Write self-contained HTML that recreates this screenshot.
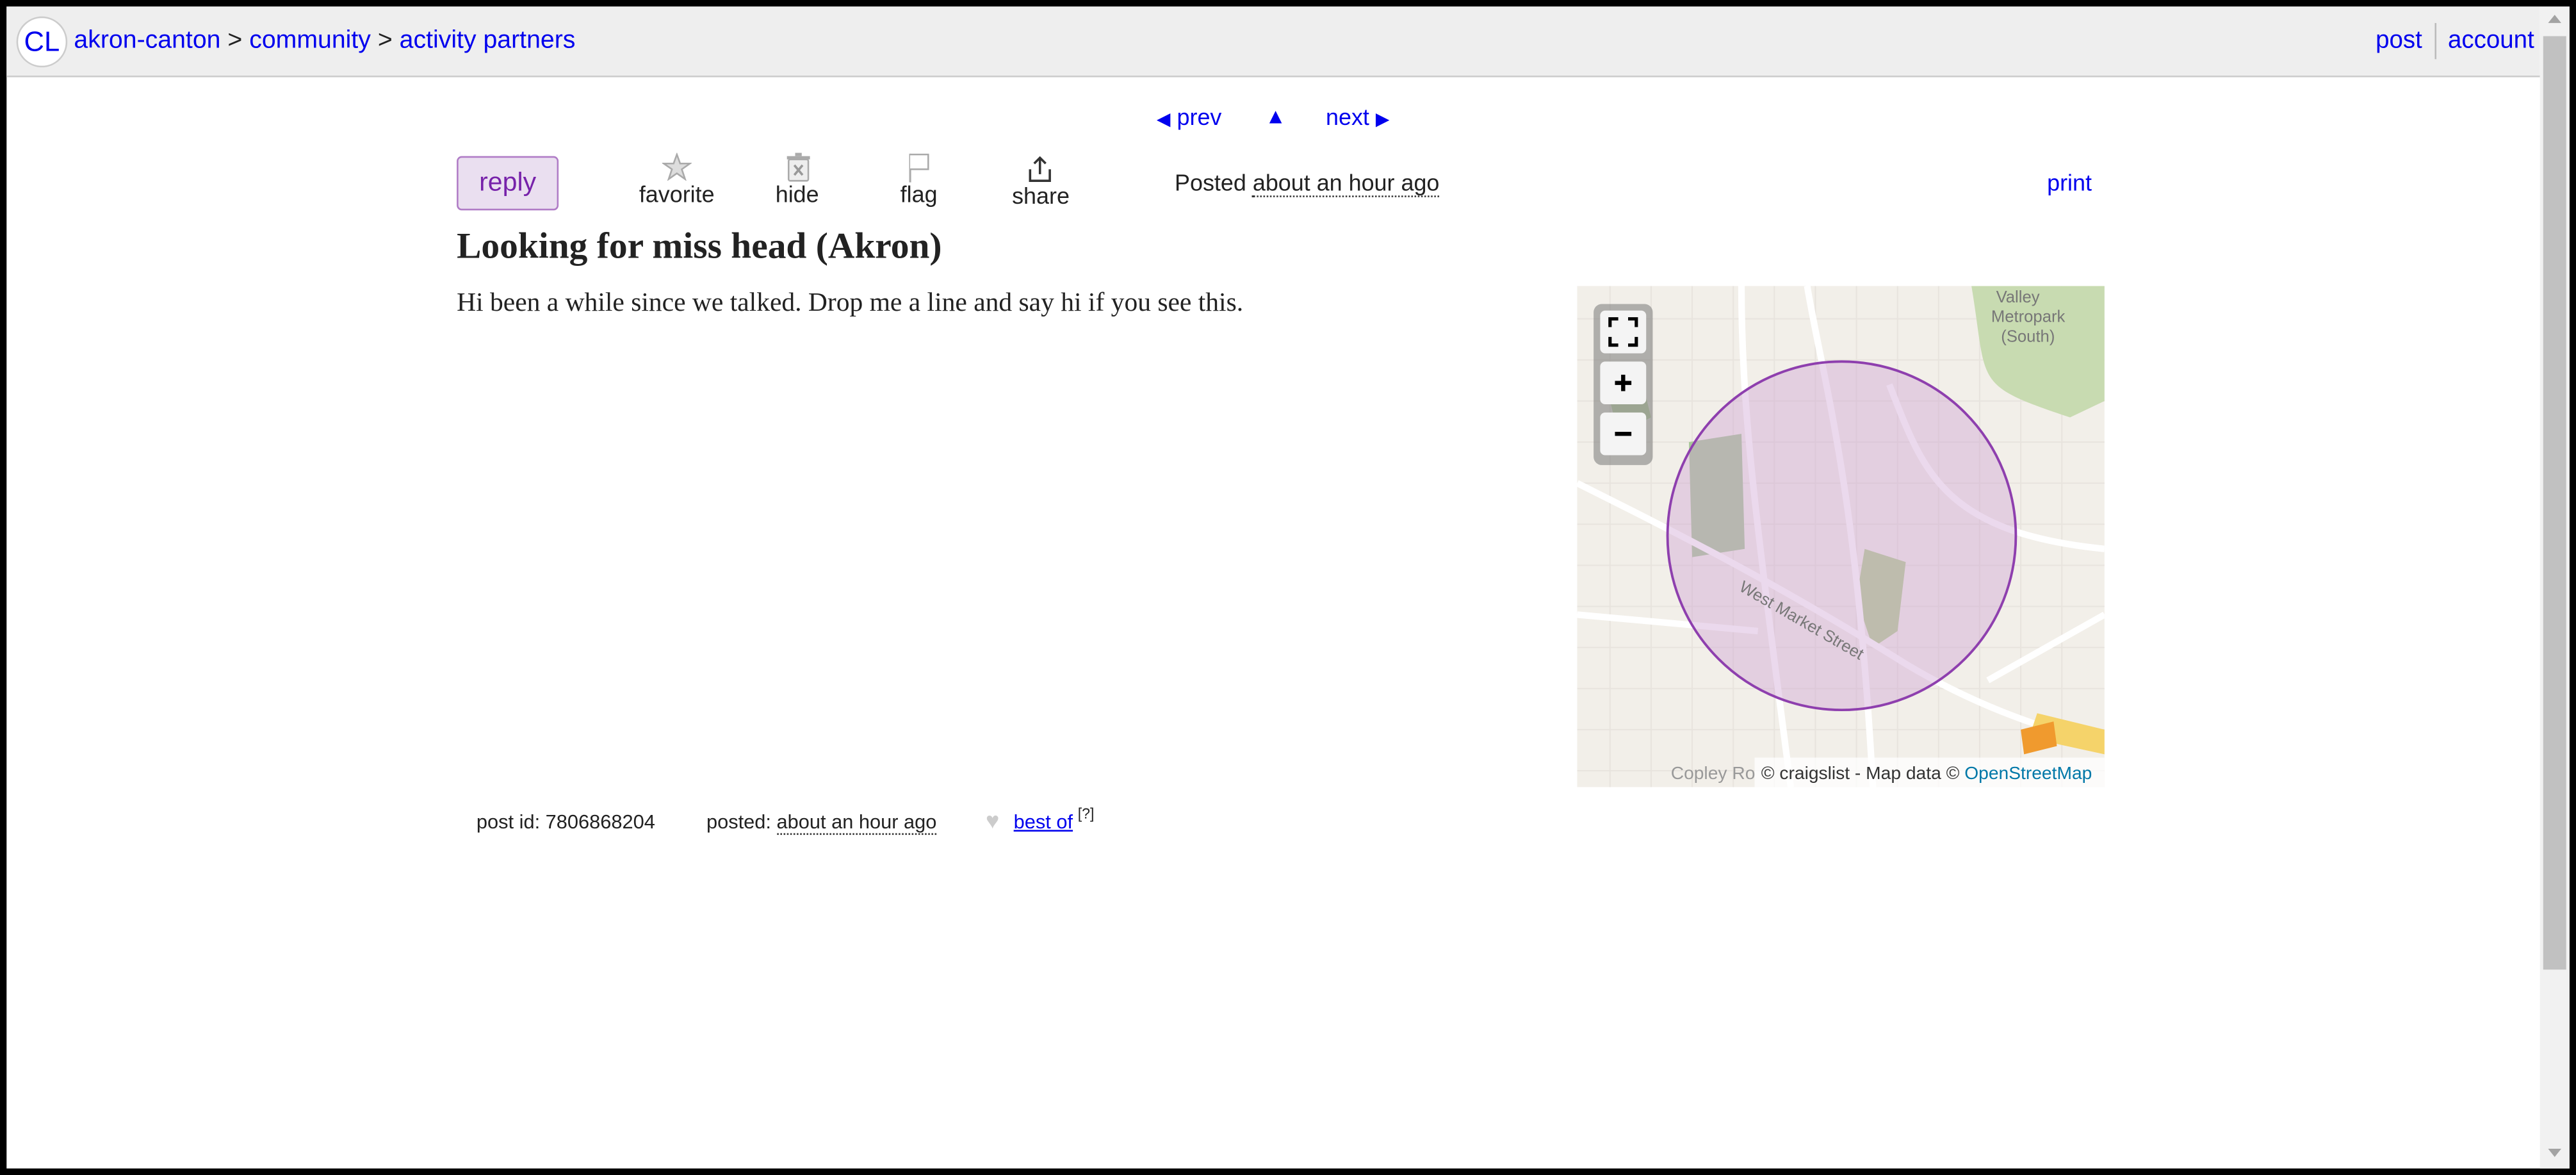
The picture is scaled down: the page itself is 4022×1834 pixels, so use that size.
<!DOCTYPE html>
<html><head><meta charset="utf-8">
<style>
html,body{margin:0;padding:0;width:4022px;height:1834px;overflow:hidden;background:#000}
#w{position:absolute;left:0;top:0;width:1568px;height:715px;transform:scale(2.5651);transform-origin:0 0;background:#fff;font-family:"Liberation Sans",Arial,sans-serif;}
.a{position:absolute;white-space:nowrap}
.blue{color:#0000ee}
.bd{position:absolute;background:#000}
</style></head><body>
<div id="w">
<div class="bd" style="left:0;top:0;width:1568px;height:4px"></div>
<div class="bd" style="left:0;top:711px;width:1568px;height:4px"></div>
<div class="bd" style="left:0;top:0;width:4px;height:715px"></div>
<div class="bd" style="left:1564px;top:0;width:4px;height:715px"></div>

<div class="a" style="left:4px;top:4px;width:1542px;height:42px;background:#eee;border-bottom:1px solid #ccc"></div>
<div class="a" style="left:10px;top:10px;width:29px;height:29px;border-radius:50%;background:#fff;border:1px solid #ccc;color:#00e;font-size:17px;line-height:29px;text-align:center">CL</div>
<div class="a" style="left:45px;top:16px;font-size:15.3px;color:#222"><span class="blue">akron-canton</span> &gt; <span class="blue">community</span> &gt; <span class="blue">activity partners</span></div>
<div class="a blue" style="left:1446px;top:16px;font-size:15px">post</div>
<div class="a" style="left:1482px;top:14px;width:1px;height:22px;background:#bbb"></div>
<div class="a blue" style="left:1490px;top:16px;font-size:15px">account</div>

<div class="a" style="left:1546px;top:4px;width:18px;height:707px;background:#f1f1f1"></div>
<div class="a" style="left:1548px;top:22px;width:14px;height:568px;background:#c1c1c1"></div>
<div class="a" style="left:1551px;top:9px;width:0;height:0;border-left:4px solid transparent;border-right:4px solid transparent;border-bottom:5px solid #a3a3a3"></div>
<div class="a" style="left:1551px;top:699px;width:0;height:0;border-left:4px solid transparent;border-right:4px solid transparent;border-top:5px solid #a3a3a3"></div>

<div class="a blue" style="left:704px;top:63px;font-size:14px"><span style="font-size:11px">◀</span> prev</div>
<div class="a blue" style="left:770px;top:63px;font-size:13px">▲</div>
<div class="a blue" style="left:807px;top:63px;font-size:14px">next <span style="font-size:11px">▶</span></div>

<div class="a" style="left:278px;top:95px;width:60px;height:31px;background:#eadff0;border:1px solid #b07cc6;border-radius:3px;color:#7722aa;font-size:16px;line-height:31px;text-align:center">reply</div>

<svg class="a" style="left:403px;top:93px" width="18" height="17" viewBox="0 0 18 17"><polygon points="9,1 11,6.5 17,6.5 12,10 14,16 9,12.5 4,16 6,10 1,6.5 7,6.5" fill="#ddd" stroke="#aaa" stroke-width="1"/></svg>
<div class="a" style="left:389px;top:110px;font-size:14px;color:#222">favorite</div>
<svg class="a" style="left:478px;top:93px" width="16" height="18" viewBox="0 0 16 18"><rect x="2" y="4" width="12" height="13" rx="1" fill="#eee" stroke="#aaa"/><rect x="1" y="2" width="14" height="2" fill="#aaa"/><rect x="6" y="0" width="4" height="2" fill="#aaa"/><path d="M5.5 7.5l5 6M10.5 7.5l-5 6" stroke="#999" stroke-width="1.4"/></svg>
<div class="a" style="left:472px;top:110px;font-size:14px;color:#222">hide</div>
<svg class="a" style="left:552px;top:93px" width="16" height="18" viewBox="0 0 16 18"><path d="M2 0.5V18" stroke="#aaa" stroke-width="1.2"/><path d="M2 1H13V10H2" fill="#fff" stroke="#aaa"/></svg>
<div class="a" style="left:548px;top:110px;font-size:14px;color:#222">flag</div>
<svg class="a" style="left:625px;top:95px" width="16" height="18" viewBox="0 0 16 18"><path d="M8 1V11M4.5 4.5L8 1l3.5 3.5" stroke="#333" stroke-width="1.4" fill="none"/><path d="M2 8V15H14V8" stroke="#333" stroke-width="1.4" fill="none"/></svg>
<div class="a" style="left:616px;top:111px;font-size:14px;color:#222">share</div>

<div class="a" style="left:715px;top:103px;font-size:14px;color:#222">Posted <span style="border-bottom:1px dotted #333">about an hour ago</span></div>
<div class="a blue" style="left:1246px;top:103px;font-size:14px">print</div>

<div class="a" style="left:278px;top:137px;font-family:'Liberation Serif',serif;font-weight:bold;font-size:22.4px;color:#222">Looking for miss head (Akron)</div>
<div class="a" style="left:278px;top:175px;font-family:'Liberation Serif',serif;font-size:16.2px;color:#222">Hi been a while since we talked. Drop me a line and say hi if you see this.</div>

<svg class="a" style="left:960px;top:174px" width="321" height="305" viewBox="0 0 321 305">
<rect width="321" height="305" fill="#f2efe9"/>
<g stroke="#e8e4de" stroke-width="0.8" fill="none">
<path d="M0 20H321M0 45H321M0 70H321M0 95H321M0 120H321M0 145H321M0 170H321M0 195H321M0 220H321M0 245H321M0 270H321M0 295H321"/>
<path d="M20 0V305M45 0V305M70 0V305M95 0V305M120 0V305M145 0V305M170 0V305M195 0V305M220 0V305M245 0V305M270 0V305M295 0V305"/>
</g>
<path d="M240 0C250 60 240 60 300 80L321 70V0Z" fill="#c8dbb1"/>
<path d="M68 95L100 90 102 160 70 165Z" fill="#a9c79a"/>
<path d="M175 160L200 168 195 210 180 220 170 190Z" fill="#b4cf95"/>
<path d="M20 70L40 60 45 80 25 90Z" fill="#c8dbb1"/>
<g stroke="#fff" stroke-width="4" fill="none">
<path d="M0 120C60 150 120 180 200 230 250 260 290 270 321 280"/>
<path d="M100 0C100 80 110 150 130 305"/>
<path d="M140 0C150 60 170 120 180 305"/>
<path d="M0 200L110 210"/>
<path d="M190 60C210 110 220 150 321 160"/>
<path d="M250 240L321 200"/>
</g>
<path d="M280 260L321 270 321 285 275 275Z" fill="#f5d36a"/>
<path d="M270 270L290 265 292 280 272 285Z" fill="#f09a2e"/>
<circle cx="161" cy="152" r="106" fill="rgba(205,160,210,0.4)" stroke="#8e3fae" stroke-width="1.5"/>
<text x="98" y="185" font-family="Liberation Sans" font-size="10" fill="#777" transform="rotate(30 98 185)">West Market Street</text>
<text x="255" y="10" font-family="Liberation Sans" font-size="10" fill="#777">Valley</text>
<text x="252" y="22" font-family="Liberation Sans" font-size="10" fill="#777">Metropark</text>
<text x="258" y="34" font-family="Liberation Sans" font-size="10" fill="#777">(South)</text>
<rect x="10" y="11" width="36" height="98" rx="5" fill="rgba(120,120,120,0.55)"/>
<rect x="14" y="15" width="28" height="26" rx="3" fill="#f4f4f4"/>
<path d="M20 25V20H25M31 20H36V25M36 31V36H31M25 36H20V31" stroke="#000" stroke-width="2" fill="none"/>
<rect x="14" y="46" width="28" height="26" rx="3" fill="#f4f4f4"/>
<path d="M28 54V64M23 59H33" stroke="#000" stroke-width="2.5"/>
<rect x="14" y="77" width="28" height="26" rx="3" fill="#f4f4f4"/>
<path d="M23 90H33" stroke="#000" stroke-width="2.5"/>
<rect x="108" y="287" width="213" height="18" fill="rgba(255,255,255,0.75)"/>
<text x="57" y="300" font-family="Liberation Sans" font-size="11" fill="#999">Copley Ro</text>
<text x="112" y="300" font-family="Liberation Sans" font-size="11" fill="#333">© craigslist - Map data © <tspan fill="#0078a8">OpenStreetMap</tspan></text>
</svg>

<div class="a" style="left:290px;top:493px;font-size:12px;color:#222">post id: 7806868204</div>
<div class="a" style="left:430px;top:493px;font-size:12px;color:#222">posted: <span style="border-bottom:1px dotted #333">about an hour ago</span></div>
<div class="a" style="left:600px;top:491px;font-size:14px;color:#ccc">♥</div>
<div class="a" style="left:617px;top:493px;font-size:12px;color:#00e;text-decoration:underline">best of</div>
<div class="a" style="left:656px;top:490px;font-size:9px;color:#222">[?]</div>
</div>
</body></html>
